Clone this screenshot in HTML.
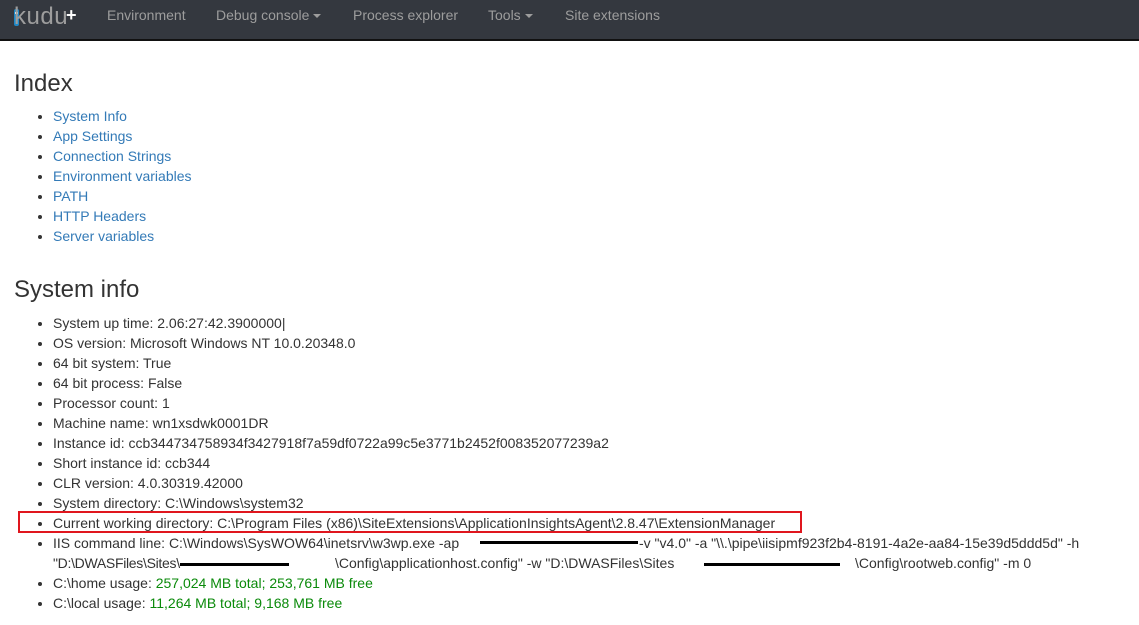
<!DOCTYPE html>
<html><head><meta charset="utf-8"><style>
body{margin:0;font-family:"Liberation Sans",Arial,sans-serif;font-size:14px;color:#333;background:#fff;width:1139px;height:625px;overflow:hidden;position:relative}
.nav{position:absolute;left:0;top:0;width:1139px;height:39px;background:#34383f;border-bottom:2px solid #111}
.nav span{position:absolute;top:7px;color:#9d9d9d;font-size:14px}
.logo{position:absolute;left:14px;top:3px;font-size:24px;color:#9d9d9d;line-height:28px}
h1{position:absolute;left:14px;margin:0;font-size:24px;font-weight:normal;color:#333}
ul{position:absolute;left:14px;margin:0;padding:0 0 0 39px;list-style:disc}
li{line-height:20px;height:20px;white-space:nowrap}
a{color:#337ab7;text-decoration:none}
.g{color:#0a8a0a}
.t{position:absolute;white-space:nowrap;line-height:20px}
.bar{position:absolute;height:3px;background:#000}
.caret{display:inline-block;width:0;height:0;border-left:4px solid transparent;border-right:4px solid transparent;border-top:4px solid #9d9d9d;vertical-align:middle;margin-left:4px}
</style></head><body>
<div class="nav">
<div class="logo"><div style="position:absolute;left:0;top:6px;width:5px;height:17px;background:#1e88c7;border-radius:2px"></div><div style="position:absolute;left:1px;top:9px;width:3px;height:2px;background:#fff"></div><div style="position:absolute;left:0;top:0;letter-spacing:0.5px">kudu</div><div style="position:absolute;left:52px;top:-2px;color:#fff;font-weight:bold;font-size:18px">+</div></div>
<span style="left:107px">Environment</span>
<span style="left:216px">Debug console<i class="caret"></i></span>
<span style="left:353px">Process explorer</span>
<span style="left:488px">Tools<i class="caret"></i></span>
<span style="left:565px">Site extensions</span>
</div>
<h1 style="top:70px">Index</h1>
<ul style="top:106px">
<li><a>System Info</a></li><li><a>App Settings</a></li><li><a>Connection Strings</a></li><li><a>Environment variables</a></li><li><a>PATH</a></li><li><a>HTTP Headers</a></li><li><a>Server variables</a></li>
</ul>
<h1 style="top:276px">System info</h1>
<ul style="top:313px">
<li>System up time: 2.06:27:42.3900000|</li>
<li>OS version: Microsoft Windows NT 10.0.20348.0</li>
<li>64 bit system: True</li>
<li>64 bit process: False</li>
<li>Processor count: 1</li>
<li>Machine name: wn1xsdwk0001DR</li>
<li>Instance id: ccb344734758934f3427918f7a59df0722a99c5e3771b2452f008352077239a2</li>
<li>Short instance id: ccb344</li>
<li>CLR version: 4.0.30319.42000</li>
<li>System directory: C:\Windows\system32</li>
<li>Current working directory: C:\Program Files (x86)\SiteExtensions\ApplicationInsightsAgent\2.8.47\ExtensionManager</li>
<li style="height:40px">IIS command line: C:\Windows\SysWOW64\inetsrv\w3wp.exe -ap</li>
<li>C:\home usage: <span class="g">257,024 MB total; 253,761 MB free</span></li>
<li>C:\local usage: <span class="g">11,264 MB total; 9,168 MB free</span></li>
</ul>
<div style="position:absolute;left:18px;top:511px;width:780px;height:18px;border:2px solid #e0161e"></div>
<div class="t" style="left:639px;top:533px">-v "v4.0" -a "\\.\pipe\iisipmf923f2b4-8191-4a2e-aa84-15e39d5ddd5d" -h</div>
<div class="t" style="left:53px;top:553px;letter-spacing:-0.3px">"D:\DWASFiles\Sites\</div>
<div class="t" style="left:335px;top:553px">\Config\applicationhost.config" -w "D:\DWASFiles\Sites</div>
<div class="t" style="left:855px;top:553px">\Config\rootweb.config" -m 0</div>
<div class="bar" style="left:480px;top:541px;width:158px"></div>
<div class="bar" style="left:180px;top:563px;width:109px"></div>
<div class="bar" style="left:704px;top:563px;width:136px"></div>
</body></html>
